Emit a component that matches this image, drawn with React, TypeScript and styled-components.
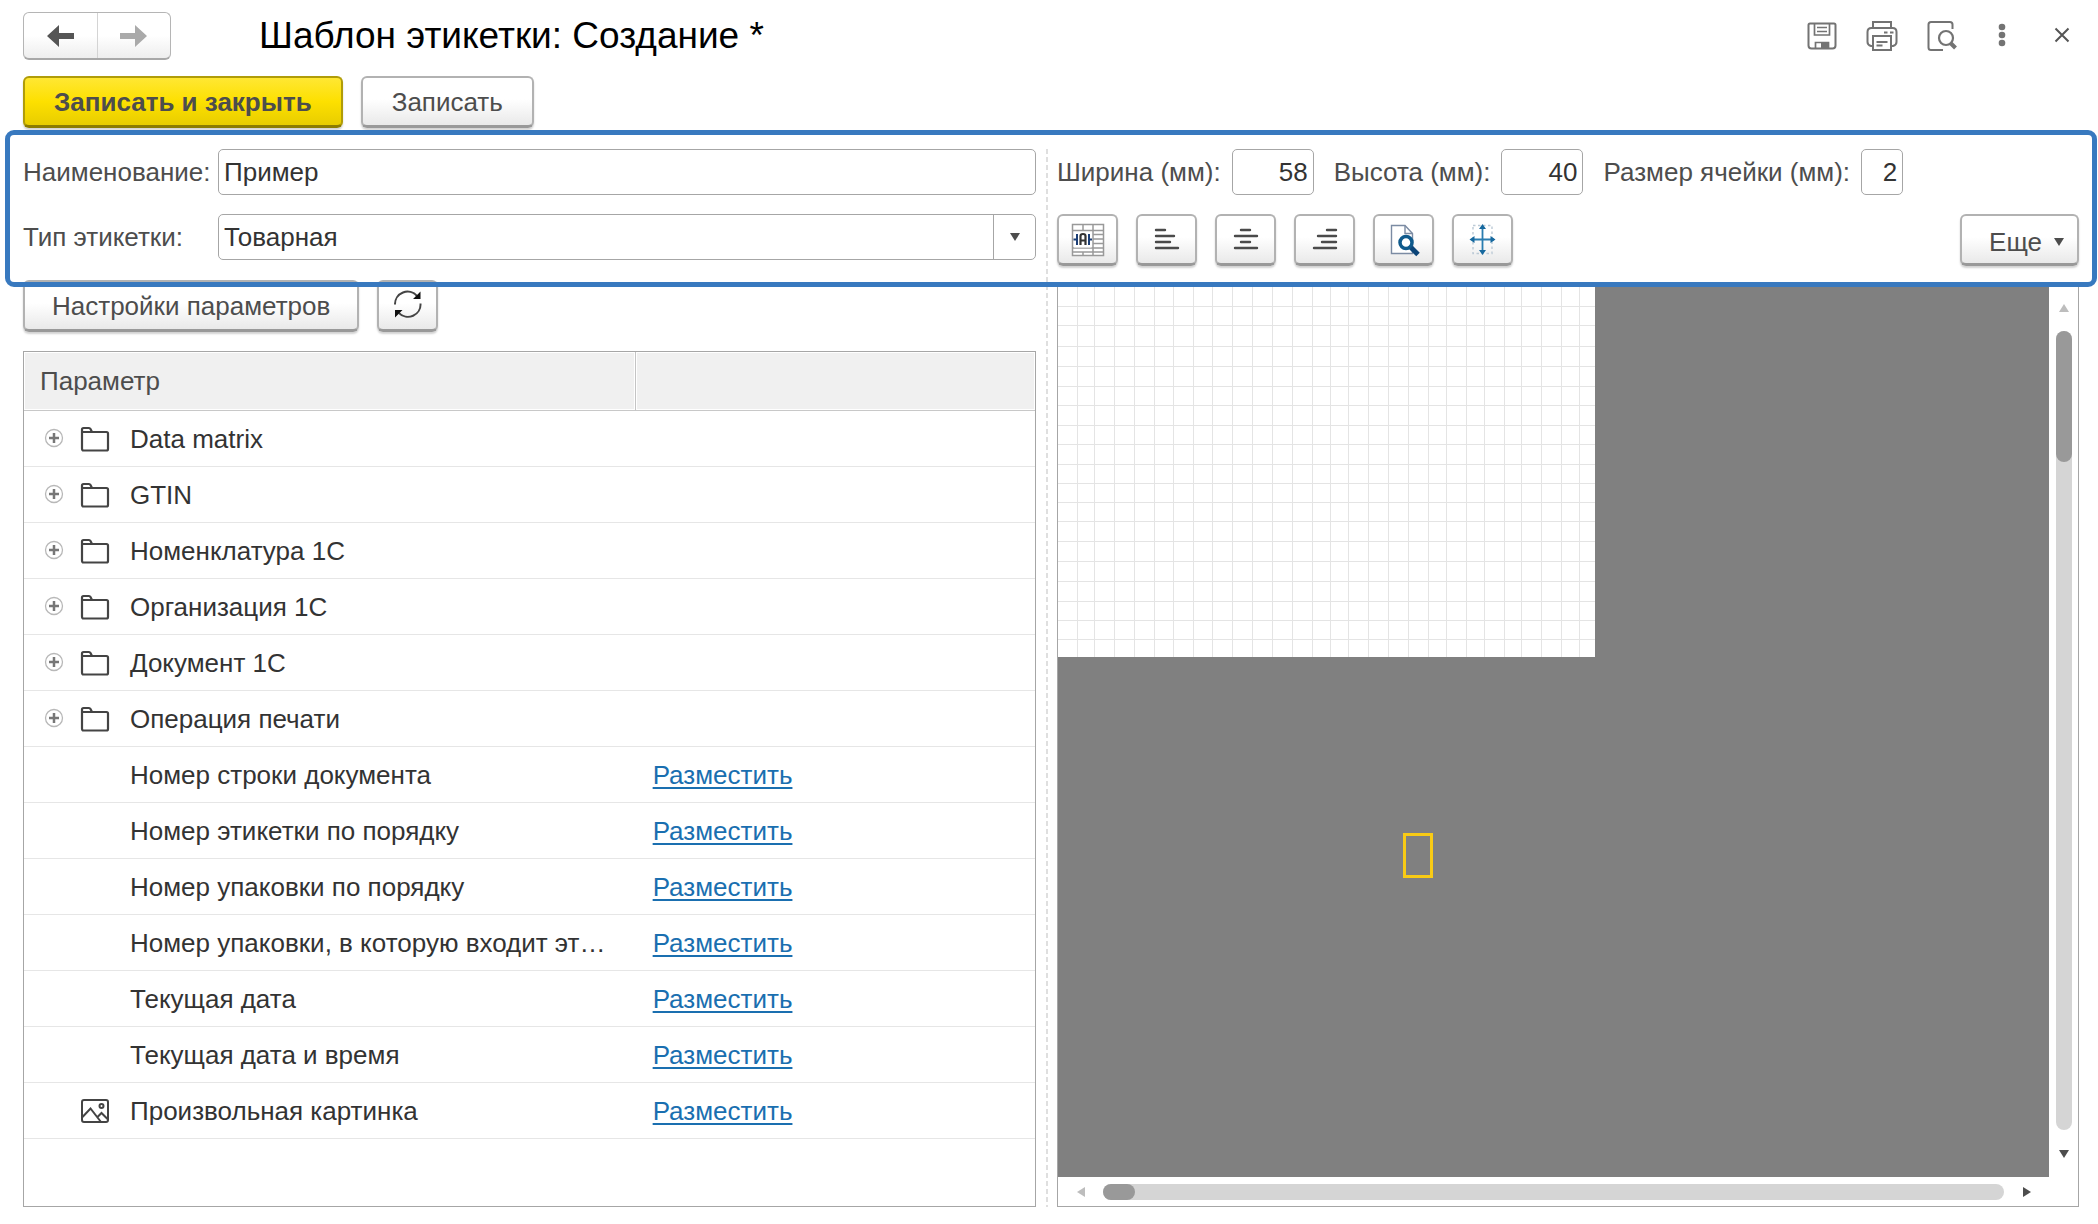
import React from 'react';
import styled, { createGlobalStyle, css } from 'styled-components';

const GlobalStyle = createGlobalStyle`
  *, *::before, *::after { box-sizing: border-box; }
  body {
    margin: 0;
    background: #fff;
    color: #333;
    font-family: "Liberation Sans", Arial, sans-serif;
    font-size: 26px;
    line-height: 30px;
  }
  button, input, select { font: inherit; color: inherit; margin: 0; }
`;

const Page = styled.div`
  display: flex;
  flex-direction: column;
  min-height: 100vh;
  padding: 12px 19px 17px 23px;
`;

const raised = css`
  border: 2px solid #b2b2b2;
  border-bottom: 3px solid #999;
  border-radius: 6px;
  background: linear-gradient(#fff 0%, #fff 45%, #e9e9e9 100%);
  box-shadow: 0 2px 2px rgba(0, 0, 0, 0.18);
  color: #4d4d4d;
  cursor: pointer;
`;

const Header = styled.header`
  display: flex;
  align-items: center;
  height: 48px;
  margin-right: -13px;
`;

const NavGroup = styled.div`
  display: flex;
  width: 148px;
  height: 48px;
  border: 1px solid #b5b5b5;
  border-bottom: 2px solid #a8a8a8;
  border-radius: 6px;
  background: linear-gradient(#fff 0%, #fff 50%, #eee 100%);
  overflow: hidden;
`;

const NavButton = styled.button`
  display: flex;
  flex: 1;
  align-items: center;
  justify-content: center;
  padding: 0;
  border: 0;
  background: none;
  color: #555;
  &:disabled { color: #aaa; }
  & + & { border-left: 1px solid #d4d4d4; }
`;

const Title = styled.h1`
  flex: 1;
  margin: 0 0 0 88px;
  color: #000;
  font-size: 37px;
  font-weight: 400;
  line-height: 44px;
`;

const HeaderButton = styled.button`
  display: flex;
  align-items: center;
  justify-content: center;
  width: 60px;
  height: 48px;
  padding: 0;
  border: 0;
  background: none;
  color: #737373;
`;

const Commands = styled.div`
  display: flex;
  gap: 18px;
  margin: 16px 0 21px;
`;

const Button = styled.button<{ $pad?: number }>`
  ${raised}
  height: 52px;
  padding: 0 ${p => p.$pad ?? 27}px;
  white-space: nowrap;
`;

const PrimaryButton = styled(Button)`
  border-color: #b09c08;
  border-bottom-color: #8c7c00;
  background: linear-gradient(#ffe733 0%, #fde000 50%, #e8cd00 100%);
  font-weight: 700;
`;

const IconButton = styled.button`
  ${raised}
  display: flex;
  align-items: center;
  justify-content: center;
  width: 61px;
  height: 52px;
  padding: 0;
`;

const Body = styled.main`
  position: relative;
  display: grid;
  flex: 1;
  grid-template-columns: minmax(0, 1013fr) 21px minmax(0, 1022fr);
`;

const Highlight = styled.div`
  position: absolute;
  top: -19px;
  right: -18px;
  left: -18px;
  height: 157px;
  border: 5px solid #3879bf;
  border-radius: 9px;
  pointer-events: none;
`;

const Column = styled.section`
  display: flex;
  flex-direction: column;
  min-width: 0;
`;

const Splitter = styled.div`
  justify-self: center;
  width: 2px;
  background: repeating-linear-gradient(#dfdfdf 0 5px, transparent 5px 8px);
`;

const Form = styled.div`
  display: grid;
  grid-template-columns: 195px minmax(0, 1fr);
  row-gap: 19px;
  align-items: center;
`;

const Label = styled.label`
  color: #4d4d4d;
  white-space: nowrap;
`;

const fieldBox = css`
  height: 46px;
  border: 1px solid #a6a6a6;
  border-radius: 5px;
  background: #fff;
  color: #333;
  outline: 0;
`;

const TextInput = styled.input`
  ${fieldBox}
  width: 100%;
  padding: 0 5px;
`;

const NumberInput = styled.input<{ $width: number }>`
  ${fieldBox}
  width: ${p => p.$width}px;
  margin: 0 20px 0 11px;
  padding: 0 5px;
  text-align: right;
`;

const SelectWrap = styled.div`
  position: relative;
`;

const Select = styled.select`
  ${fieldBox}
  width: 100%;
  padding: 0 48px 0 5px;
  appearance: none;
`;

const SelectArrow = styled.span`
  position: absolute;
  top: 1px;
  right: 1px;
  bottom: 1px;
  display: flex;
  align-items: center;
  justify-content: center;
  width: 42px;
  border-left: 1px solid #a6a6a6;
  color: #4d4d4d;
  pointer-events: none;
`;

const ParamTools = styled.div`
  display: flex;
  gap: 18px;
  margin: 20px 0 19px;
`;

const TableFrame = styled.div`
  flex: 1;
  border: 1px solid #a6a6a6;
`;

const Table = styled.table`
  width: 100%;
  border-collapse: separate;
  border-spacing: 0;
  table-layout: fixed;
`;

const HeadCell = styled.th<{ $width?: string }>`
  width: ${p => p.$width ?? 'auto'};
  height: 59px;
  padding: 0 16px;
  border-bottom: 1px solid #c8c8c8;
  background: #f0f0f0;
  box-shadow: inset 0 0 0 1px #fff;
  color: #4d4d4d;
  font-weight: 400;
  text-align: left;
  & + & { border-left: 1px solid #c4c4c4; }
`;

const Cell = styled.td`
  height: 56px;
  padding: 0 16px 0 18px;
  border-bottom: 1px solid #e6e6e6;
  white-space: nowrap;
`;

const ParamName = styled.div`
  display: flex;
  align-items: center;
`;

const ExpandSlot = styled.span`
  display: flex;
  width: 38px;
`;

const IconSlot = styled.span`
  display: flex;
  width: 50px;
`;

const Expander = styled.button`
  display: flex;
  padding: 0 0 2px 2px;
  border: 0;
  background: none;
`;

const Link = styled.a`
  color: #1a6fb0;
  text-decoration: underline;
  text-decoration-thickness: 2px;
  text-underline-offset: 3px;
`;

const SizeRow = styled.div`
  display: flex;
  align-items: center;
  height: 46px;
`;

const Toolbar = styled.div`
  display: flex;
  gap: 18px;
  margin: 19px 0 17px;
`;

const MoreButton = styled(Button)`
  display: flex;
  align-items: center;
  gap: 12px;
  margin-left: auto;
  padding: 4px 13px 0 27px;
`;

const Editor = styled.div`
  display: grid;
  flex: 1;
  grid-template-columns: minmax(0, 1fr) 29px;
  grid-template-rows: minmax(0, 1fr) 29px;
  border: 1px solid #a6a6a6;
`;

const Canvas = styled.div`
  position: relative;
  overflow: hidden;
  background: #808080;
`;

const Sheet = styled.svg`
  display: block;
  background: #fff;
`;

const Marker = styled.div`
  position: absolute;
  top: 549px;
  left: 345px;
  width: 30px;
  height: 45px;
  border: 3px solid #f9cb14;
`;

const ScrollBar = styled.div<{ $vertical?: boolean }>`
  display: flex;
  flex-direction: ${p => (p.$vertical ? 'column' : 'row')};
  align-items: center;
`;

const ScrollArrow = styled.button<{ $vertical?: boolean; $off?: boolean }>`
  display: flex;
  align-items: center;
  justify-content: center;
  width: ${p => (p.$vertical ? 29 : 45)}px;
  height: ${p => (p.$vertical ? 47 : 29)}px;
  padding: 0;
  border: 0;
  background: none;
  color: ${p => (p.$off ? '#bdbdbd' : '#4d4d4d')};
`;

const Track = styled.div<{ $vertical?: boolean }>`
  flex: 1;
  ${p => (p.$vertical ? 'width' : 'height')}: 16px;
  border-radius: 8px;
  background: #d5d5d5;
`;

const Thumb = styled.div<{ $vertical?: boolean }>`
  width: ${p => (p.$vertical ? 16 : 32)}px;
  height: ${p => (p.$vertical ? 131 : 16)}px;
  border-radius: 8px;
  background: #999;
`;

const Arrow = ({ flip }: { flip?: boolean }) => (
  <svg width="27" height="22" viewBox="0 0 27 22" fill="currentColor">
    <path d={flip ? 'M27 11 15 0v8H0v6h15v8z' : 'M0 11 12 0v8h15v6H12v8z'} />
  </svg>
);

const triangles = {
  down: 'M0 1h10L5 9z',
  up: 'M0 9h10L5 1z',
  left: 'M9 0v10L1 5z',
  right: 'M1 0v10l8-5z',
};

const Triangle = ({ dir, size = 10 }: { dir: keyof typeof triangles; size?: number }) => (
  <svg width={size} height={size} viewBox="0 0 10 10" fill="currentColor"><path d={triangles[dir]} /></svg>
);

const SaveIcon = () => (
  <svg width="30" height="30" viewBox="0 0 30 30" fill="none" stroke="currentColor" strokeWidth="2">
    <path d="M3 2.500h24q1.500 0 1.500 1.500v20.500q0 3-3 3h-21q-3 0-3-3V4q0-1.500 1.500-1.500z" />
    <path d="M7.500 3v11h15V3M10 6.500h10M10 10.500h10M8.500 27v-5.500h13V27" strokeWidth="1.700" />
    <path d="M14 22h7v5h-7z" fill="currentColor" stroke="none" />
  </svg>
);

const PrintIcon = () => (
  <svg width="32" height="32" viewBox="0 0 32 32" fill="none" stroke="currentColor" strokeWidth="2">
    <path d="M7 8V2h18v6M7 26H5q-3.500-1-3.500-4V12q0-4 4-4h21q4 0 4 4v10q0 3-3.500 4h-2" />
    <path d="M7 16h18v14H7zM10.500 22h11M10.500 25.500h6" />
    <path d="M18 12.500h3.500M24 12.500h3.500" />
  </svg>
);

const PreviewIcon = () => (
  <svg width="30" height="32" viewBox="0 0 30 32" fill="none" stroke="currentColor" strokeWidth="2">
    <path d="M16 30H4q-2.500 0-2.500-2.500v-23Q1.500 2 4 2h19q2.500 0 2.500 2.500V9" />
    <circle cx="19" cy="18" r="7" strokeWidth="2.200" />
    <path d="m23.500 23 5 5" strokeWidth="4" />
  </svg>
);

const DotsIcon = () => (
  <svg width="8" height="26" viewBox="0 0 8 26" fill="currentColor">
    <circle cx="4" cy="4" r="3.300" /><circle cx="4" cy="12" r="3.300" /><circle cx="4" cy="20" r="3.300" />
  </svg>
);

const CloseIcon = () => (
  <svg width="16" height="20" viewBox="0 0 16 20" stroke="#555" strokeWidth="2">
    <path d="m1.500 2.500 13 13M14.500 2.500l-13 13" />
  </svg>
);

const RefreshIcon = () => (
  <svg width="30" height="32" viewBox="0 0 30 32" fill="none" stroke="#444" strokeWidth="2">
    <path d="M2 14.500A12.500 12.500 0 0 1 24 6M27.500 13.500A12.500 12.500 0 0 1 6 23" />
    <path d="M27.500 1.500v7.500h-7.500zM2 27.500V20h7.500z" fill="#111" stroke="none" />
  </svg>
);

const MergeIcon = () => (
  <svg width="34" height="34" viewBox="0 0 34 34" fill="none" stroke="#999" strokeWidth="1.500">
    <rect x="1.500" y="1.500" width="31" height="31" fill="#fff" />
    <path d="M1.500 7.500h31M1.500 25h31M1.500 29h31M22 1.500v31M12 1.500v6M12 29v3.500M22 11.500h10M22 16h10M22 20.500h10" />
    <path d="M3 9v15.500h17.500V9z" fill="#fff" stroke="none" />
    <path d="M2.500 16.500H6M6 11v11M21 16.500h-3M18 11v11" stroke="#1c3f77" strokeWidth="2" />
    <path d="M9.500 22V13q0-2 2.500-2t2.500 2v9M9.500 17.500h5" stroke="#333" strokeWidth="2.200" />
  </svg>
);

const AlignIcon = ({ d }: { d: string }) => (
  <svg width="34" height="34" viewBox="0 0 34 34" stroke="#4a4a4a" strokeWidth="2.400" strokeLinecap="round"><path d={d} /></svg>
);

const PageSearchIcon = () => (
  <svg width="34" height="34" viewBox="0 0 34 34" fill="none">
    <path d="M4.500 2.500H18l7.500 8v20h-21z" fill="#fff" stroke="#7b8ba3" strokeWidth="1.400" />
    <path d="M18 2.500v8h7.500" stroke="#7b8ba3" strokeWidth="1.400" />
    <circle cx="19" cy="19.500" r="6" fill="#fff" stroke="#0f5a8c" strokeWidth="3.500" />
    <path d="m24 24.500 7 7" stroke="#0b4478" strokeWidth="5" />
  </svg>
);

const FitIcon = () => (
  <svg width="34" height="34" viewBox="0 0 34 34" fill="none">
    <rect x="7" y="2.500" width="19" height="28" stroke="#bccad6" strokeWidth="1.400" strokeDasharray="2.500 2.500" />
    <path d="M16.500 4v26M6 16.500h22" stroke="#2a7db0" strokeWidth="1.800" />
    <path d="m16.500 1 3.500 5h-7zM16.500 32l3.500-5h-7zM3.500 16.500l5-3.500v7zM29.500 16.500l-5-3.500v7z" fill="#17699f" />
  </svg>
);

const PlusIcon = () => (
  <svg width="20" height="20" viewBox="0 0 20 20" fill="none">
    <circle cx="10" cy="10" r="8.500" stroke="#b8b8b8" strokeWidth="1.300" />
    <path d="M10 5v10M5 10h10" stroke="#777" strokeWidth="2.500" />
  </svg>
);

const FolderIcon = () => (
  <svg width="30" height="26" viewBox="0 0 30 26" fill="none" stroke="#444" strokeWidth="2.200">
    <path d="M2 6v16.500Q2 24.500 3.500 24.500h23q1.500 0 1.500-1.500V7.500Q28 6 26.500 6H12l-1.500-3Q10 2 9 2H3.500Q2 2 2 3.500V6h10" />
  </svg>
);

const ImageIcon = () => (
  <svg width="30" height="26" viewBox="0 0 30 26" fill="none" stroke="#444" strokeWidth="2">
    <rect x="2" y="2" width="26" height="22" rx="2" />
    <path d="m2.500 19 8-8.500L21 24M17.500 19l4-4 6 6" />
    <circle cx="21.500" cy="8" r="2" />
  </svg>
);

const columnLines = [19, 36, 56, 76, 96, 115, 135, 154, 174, 194, 214, 234, 254, 272, 290, 310, 330, 350, 370, 388, 408, 426, 446, 463, 483, 503, 521];
const rowLines = [22, 41, 62, 82, 102, 121, 141, 160, 180, 199, 218, 237, 257, 277, 297, 317, 336, 355];
const gridPath = columnLines.map(x => `M${x}.5 0V373`).join('') + rowLines.map(y => `M0 ${y}.5H537`).join('');

const aligns = [
  { name: 'По левому краю', d: 'M6 7h9M6 13h18M6 19h14M6 25h22' },
  { name: 'По центру', d: 'M12 7h9M6 13h22M12 19h9M6 25h22' },
  { name: 'По правому краю', d: 'M19 7h9M10 13h18M14 19h14M6 25h22' },
];

type Param = { name: string; kind: 'folder' | 'item' | 'image' };

const params: Param[] = [
  { name: 'Data matrix', kind: 'folder' },
  { name: 'GTIN', kind: 'folder' },
  { name: 'Номенклатура 1С', kind: 'folder' },
  { name: 'Организация 1С', kind: 'folder' },
  { name: 'Документ 1С', kind: 'folder' },
  { name: 'Операция печати', kind: 'folder' },
  { name: 'Номер строки документа', kind: 'item' },
  { name: 'Номер этикетки по порядку', kind: 'item' },
  { name: 'Номер упаковки по порядку', kind: 'item' },
  { name: 'Номер упаковки, в которую входит эт…', kind: 'item' },
  { name: 'Текущая дата', kind: 'item' },
  { name: 'Текущая дата и время', kind: 'item' },
  { name: 'Произвольная картинка', kind: 'image' },
];

const ParamRow = ({ name, kind }: Param) => (
  <tr>
    <Cell>
      <ParamName>
        <ExpandSlot>
          {kind === 'folder' && <Expander type="button" aria-label={`Развернуть ${name}`}><PlusIcon /></Expander>}
        </ExpandSlot>
        <IconSlot>
          {kind === 'folder' && <FolderIcon />}
          {kind === 'image' && <ImageIcon />}
        </IconSlot>
        {name}
      </ParamName>
    </Cell>
    <Cell>{kind !== 'folder' && <Link href="#">Разместить</Link>}</Cell>
  </tr>
);

export default function App() {
  return (
    <>
      <GlobalStyle />
      <Page>
        <Header>
          <NavGroup>
            <NavButton type="button" aria-label="Назад"><Arrow /></NavButton>
            <NavButton type="button" aria-label="Вперед" disabled><Arrow flip /></NavButton>
          </NavGroup>
          <Title>Шаблон этикетки: Создание *</Title>
          <HeaderButton type="button" aria-label="Сохранить"><SaveIcon /></HeaderButton>
          <HeaderButton type="button" aria-label="Печать"><PrintIcon /></HeaderButton>
          <HeaderButton type="button" aria-label="Просмотр"><PreviewIcon /></HeaderButton>
          <HeaderButton type="button" aria-label="Меню"><DotsIcon /></HeaderButton>
          <HeaderButton type="button" aria-label="Закрыть"><CloseIcon /></HeaderButton>
        </Header>

        <Commands>
          <PrimaryButton type="button" $pad={29}>Записать и закрыть</PrimaryButton>
          <Button type="button" $pad={29}>Записать</Button>
        </Commands>

        <Body>
          <Column>
            <Form>
              <Label htmlFor="name">Наименование:</Label>
              <TextInput id="name" defaultValue="Пример" />
              <Label htmlFor="type">Тип этикетки:</Label>
              <SelectWrap>
                <Select id="type" defaultValue="Товарная"><option>Товарная</option></Select>
                <SelectArrow><Triangle dir="down" /></SelectArrow>
              </SelectWrap>
            </Form>
            <ParamTools>
              <Button type="button">Настройки параметров</Button>
              <IconButton type="button" aria-label="Обновить"><RefreshIcon /></IconButton>
            </ParamTools>
            <TableFrame>
              <Table>
                <thead>
                  <tr>
                    <HeadCell $width="60.4%">Параметр</HeadCell>
                    <HeadCell aria-label="Действие" />
                  </tr>
                </thead>
                <tbody>{params.map(p => <ParamRow key={p.name} {...p} />)}</tbody>
              </Table>
            </TableFrame>
          </Column>

          <Splitter />

          <Column>
            <SizeRow>
              <Label htmlFor="width">Ширина (мм):</Label>
              <NumberInput id="width" defaultValue="58" $width={82} />
              <Label htmlFor="height">Высота (мм):</Label>
              <NumberInput id="height" defaultValue="40" $width={82} />
              <Label htmlFor="cell">Размер ячейки (мм):</Label>
              <NumberInput id="cell" defaultValue="2" $width={42} />
            </SizeRow>
            <Toolbar>
              <IconButton type="button" aria-label="Объединить ячейки"><MergeIcon /></IconButton>
              {aligns.map(a => (
                <IconButton key={a.name} type="button" aria-label={a.name}><AlignIcon d={a.d} /></IconButton>
              ))}
              <IconButton type="button" aria-label="Предпросмотр"><PageSearchIcon /></IconButton>
              <IconButton type="button" aria-label="Размер по содержимому"><FitIcon /></IconButton>
              <MoreButton type="button">Еще <Triangle dir="down" /></MoreButton>
            </Toolbar>
            <Editor>
              <Canvas>
                <Sheet width="537" height="373" viewBox="0 0 537 373">
                  <path d={gridPath} stroke="#e4e4e4" />
                </Sheet>
                <Marker />
              </Canvas>
              <ScrollBar $vertical>
                <ScrollArrow type="button" aria-label="Вверх" $vertical $off><Triangle dir="up" /></ScrollArrow>
                <Track $vertical><Thumb $vertical /></Track>
                <ScrollArrow type="button" aria-label="Вниз" $vertical><Triangle dir="down" /></ScrollArrow>
              </ScrollBar>
              <ScrollBar>
                <ScrollArrow type="button" aria-label="Влево" $off><Triangle dir="left" /></ScrollArrow>
                <Track><Thumb /></Track>
                <ScrollArrow type="button" aria-label="Вправо"><Triangle dir="right" /></ScrollArrow>
              </ScrollBar>
            </Editor>
          </Column>
          <Highlight />
        </Body>
      </Page>
    </>
  );
}
